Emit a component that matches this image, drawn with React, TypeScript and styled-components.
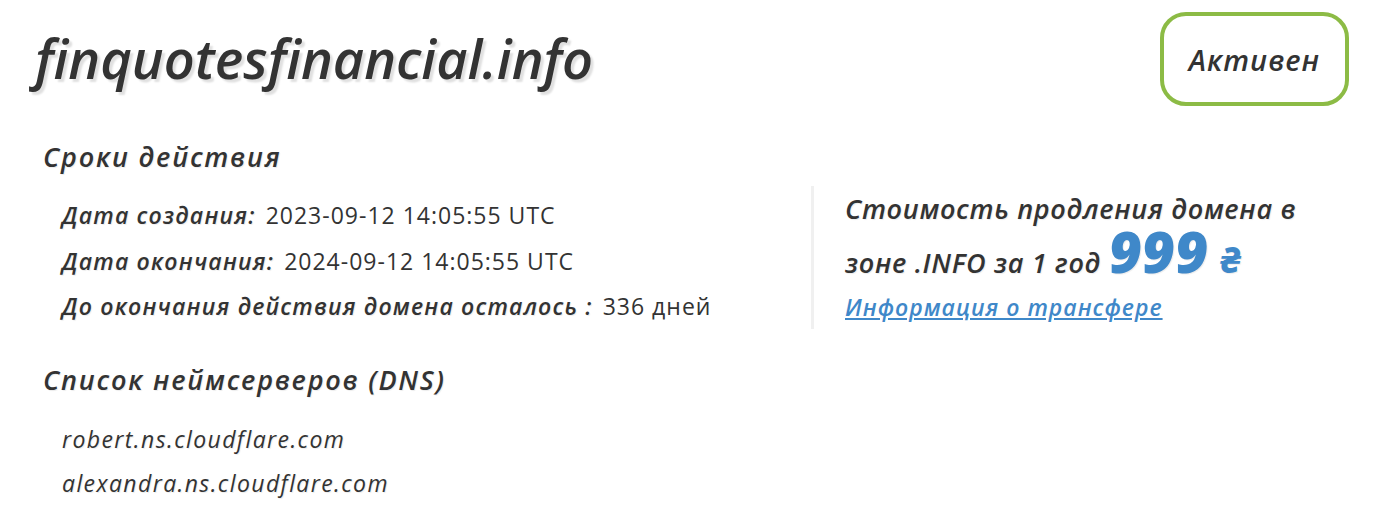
import styled, { createGlobalStyle } from 'styled-components';

const GlobalStyle = createGlobalStyle`
  html, body {
    margin: 0;
    padding: 0;
    background: #ffffff;
  }
  body {
    font-family: 'Open Sans', 'Noto Sans', sans-serif;
    color: #333333;
  }
`;

const Page = styled.div`
  width: 1382px;
  height: 514px;
  box-sizing: border-box;
  padding: 12px 33px 0 35px;
  overflow: hidden;
`;

const Header = styled.div`
  display: flex;
  justify-content: space-between;
  align-items: flex-start;
`;

const DomainTitle = styled.h1`
  margin: 14px 0 0;
  font-size: 54px;
  font-weight: 600;
  font-style: italic;
  line-height: 64px;
  color: #333;
  text-shadow: 3px 3px 2px #e0e0e0;
`;

const StatusBadge = styled.div`
  width: 189px;
  height: 94px;
  box-sizing: border-box;
  border: 4px solid #8cbb45;
  border-radius: 26px;
  display: flex;
  align-items: center;
  justify-content: center;
  font-size: 29px;
  font-weight: 600;
  font-style: italic;
  letter-spacing: 1px;
  color: #333;
`;

const Body = styled.div`
  display: flex;
  margin-top: 34px;
`;

const LeftColumn = styled.div`
  width: 768px;
  padding-left: 8px;
`;

const SectionTitle = styled.h2`
  margin: 0;
  font-size: 27px;
  font-weight: 600;
  font-style: italic;
  letter-spacing: 1.8px;
  line-height: 34px;
  color: #333;
  text-shadow: 1px 1px 1px #ececec;
`;

const List = styled.div<{ $gap: number; $top: number; $bottom: number }>`
  display: flex;
  flex-direction: column;
  padding-left: 19px;
  margin: ${(p) => p.$top}px 0 ${(p) => p.$bottom}px;
  gap: ${(p) => p.$gap}px;
`;

const Row = styled.div`
  font-size: 23px;
  line-height: 34px;
  white-space: nowrap;
`;

const Label = styled.span`
  font-style: italic;
  font-weight: 600;
  letter-spacing: 1.2px;
  margin-right: 10px;
  text-shadow: 1px 1px 1px #ececec;
`;

const Value = styled.span`
  font-weight: 400;
  letter-spacing: 1px;
`;

const ServerName = styled.div`
  font-size: 23px;
  line-height: 34px;
  font-style: italic;
  font-weight: 500;
  letter-spacing: 1.4px;
  text-shadow: 1px 1px 1px #ececec;
`;

const PricePanel = styled.div`
  margin-top: 46px;
  align-self: flex-start;
  border-left: 3px solid #f0f0f0;
  padding: 0 0 0 31px;
  height: 143px;
  box-sizing: border-box;
  width: 490px;
`;

const PriceText = styled.div`
  font-size: 27px;
  font-weight: 600;
  font-style: italic;
  letter-spacing: 0.7px;
  line-height: 45px;
  color: #333;
  text-shadow: 1px 1px 1px #ececec;
`;

const Price = styled.span`
  font-size: 57px;
  font-weight: 800;
  color: #3f88c9;
  letter-spacing: 0;
  line-height: 40px;
`;

const Currency = styled.span`
  font-size: 36px;
  font-weight: 800;
  color: #3f88c9;
  margin-left: 12px;
  line-height: 40px;
`;

const TransferLink = styled.a`
  display: block;
  margin-top: 7px;
  font-size: 23px;
  line-height: 30px;
  font-weight: 600;
  font-style: italic;
  letter-spacing: 1px;
  color: #3f88c9;
  text-decoration: underline;
`;

const App = () => {
  return (
    <>
      <GlobalStyle />
      <Page>
        <Header>
          <DomainTitle>finquotesfinancial.info</DomainTitle>
          <StatusBadge>Активен</StatusBadge>
        </Header>
        <Body>
          <LeftColumn>
            <SectionTitle>Сроки действия</SectionTitle>
            <List $gap={11.5} $top={24} $bottom={40}>
              <Row>
                <Label>Дата создания:</Label>
                <Value>2023-09-12 14:05:55 UTC</Value>
              </Row>
              <Row>
                <Label>Дата окончания:</Label>
                <Value>2024-09-12 14:05:55 UTC</Value>
              </Row>
              <Row>
                <Label>До окончания действия домена осталось :</Label>
                <Value>336 дней</Value>
              </Row>
            </List>
            <SectionTitle>Список неймсерверов (DNS)</SectionTitle>
            <List $gap={10} $top={25} $bottom={0}>
              <ServerName>robert.ns.cloudflare.com</ServerName>
              <ServerName>alexandra.ns.cloudflare.com</ServerName>
            </List>
          </LeftColumn>
          <PricePanel>
            <PriceText>
              Стоимость продления домена в зоне .INFO за 1 год <Price>999</Price>
              <Currency>₴</Currency>
            </PriceText>
            <TransferLink href="#">Информация о трансфере</TransferLink>
          </PricePanel>
        </Body>
      </Page>
    </>
  );
};

export default App;
